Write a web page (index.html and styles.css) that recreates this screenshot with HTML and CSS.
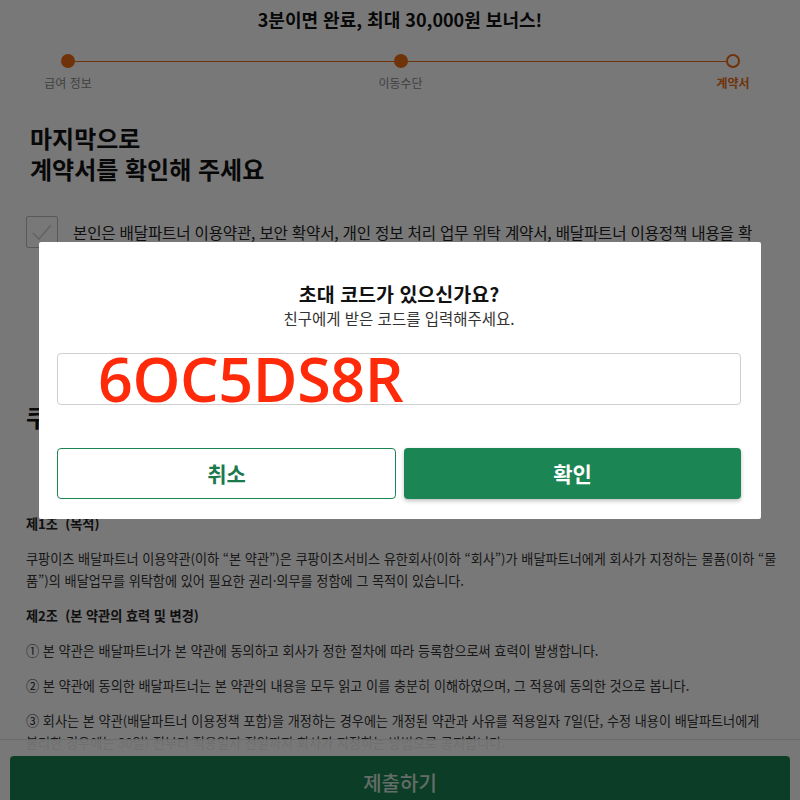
FILE: index.html
```html
<!DOCTYPE html>
<html lang="ko">
<head>
	<meta charset="utf-8">
	<meta name="viewport" content="width=device-width, initial-scale=1.0">
	<title>계약서 확인</title>
	<link rel="stylesheet" href="styles.css">
</head>
<body>
	<div class="page">
		<h1 class="top-title">3분이면 완료, 최대 30,000원 보너스!</h1>

		<div class="stepper">
			<span class="dot done"></span>
			<span class="line"></span>
			<span class="dot done"></span>
			<span class="line"></span>
			<span class="dot current"></span>
			<div class="label">급여 정보</div>
			<div class="label label-mid">이동수단</div>
			<div class="label label-end active">계약서</div>
		</div>

		<h2 class="intro">마지막으로<br>계약서를 확인해 주세요</h2>

		<div class="agree">
			<div class="checkbox">
				<svg width="32" height="32" viewBox="0 0 32 32">
					<polyline points="7,17 13,23 25,9" fill="none" stroke="#d2d2d2" stroke-width="1.6"/>
				</svg>
			</div>
			<p class="agree-text">본인은 배달파트너 이용약관, 보안 확약서, 개인 정보 처리 업무 위탁 계약서, 배달파트너 이용정책 내용을 확인하였으며 이에 동의합니다.</p>
		</div>

		<h3 class="terms-title">쿠팡이츠 배달파트너 이용약관</h3>

		<div class="terms">
			<p class="article">제1조 &nbsp;(목적)</p>
			<p>쿠팡이츠 배달파트너 이용약관(이하 “본 약관”)은 쿠팡이츠서비스 유한회사(이하 “회사”)가 배달파트너에게 회사가 지정하는 물품(이하 “물품”)의 배달업무를 위탁함에 있어 필요한 권리·의무를 정함에 그 목적이 있습니다.</p>
			<p class="article">제2조 &nbsp;(본 약관의 효력 및 변경)</p>
			<p>① 본 약관은 배달파트너가 본 약관에 동의하고 회사가 정한 절차에 따라 등록함으로써 효력이 발생합니다.</p>
			<p>② 본 약관에 동의한 배달파트너는 본 약관의 내용을 모두 읽고 이를 충분히 이해하였으며, 그 적용에 동의한 것으로 봅니다.</p>
			<p class="keep">③ 회사는 본 약관(배달파트너 이용정책 포함)을 개정하는 경우에는 개정된 약관과 사유를 적용일자 7일(단, 수정 내용이 배달파트너에게 불리한 경우에는 30일) 전부터 적용일자 전일까지 회사가 지정하는 방법으로 공지합니다.</p>
		</div>
	</div>

	<div class="footer">
		<button class="submit" disabled>제출하기</button>
	</div>

	<div class="overlay">
		<div class="modal">
			<h4 class="modal-title">초대 코드가 있으신가요?</h4>
			<p class="modal-sub">친구에게 받은 코드를 입력해주세요.</p>
			<div class="code-box">
				<span class="code">6OC5DS8R</span>
			</div>
			<div class="modal-btns">
				<button class="btn btn-cancel">취소</button>
				<button class="btn btn-ok">확인</button>
			</div>
		</div>
	</div>
</body>
</html>
```

FILE: styles.css
```css
* {
	padding: 0;
	margin: 0;
	box-sizing: border-box;
}
html, body {
	width: 100%;
	height: 100vh;
	overflow: hidden;
	background: #fff;
	color: #111;
	font-family: "Noto Sans CJK KR", "Noto Sans", sans-serif;
}
.page {
	height: 100vh;
	overflow: hidden;
}
.top-title {
	padding-top: 6px;
	font-size: 18px;
	line-height: 26px;
	font-weight: 700;
	text-align: center;
}
.stepper {
	display: grid;
	grid-template-columns: 14px 1fr 14px 1fr 14px;
	align-items: center;
	row-gap: 6px;
	margin-top: 22px;
	padding: 0 60px 0 61px;
}
.dot {
	width: 14px;
	height: 14px;
	border-radius: 50%;
	background: #ec6b15;
}
.dot.current {
	background: #fff;
	border: 2.5px solid #ec6b15;
}
.line {
	height: 1px;
	background: #ec6b15;
}
.label {
	grid-column: 1;
	display: flex;
	justify-content: center;
	width: 14px;
	white-space: nowrap;
	font-size: 12px;
	line-height: 18px;
	color: #8a8a8a;
}
.label-mid {
	grid-column: 3;
}
.label-end {
	grid-column: 5;
}
.label.active {
	color: #ec6b15;
	font-weight: 700;
}
.intro {
	margin-top: 30px;
	padding-left: 30px;
	font-size: 24px;
	line-height: 31px;
	font-weight: 700;
}
.agree {
	display: flex;
	gap: 15px;
	margin-top: 32px;
	padding-left: 26px;
}
.checkbox {
	width: 32px;
	height: 32px;
	flex-shrink: 0;
	border: 1.5px solid #bdbdbd;
	border-radius: 2px;
}
.checkbox svg {
	display: block;
	margin: -1.5px;
}
.agree-text {
	width: 684px;
	margin-top: 4px;
	font-size: 15.6px;
	line-height: 24px;
	letter-spacing: -0.2px;
	color: #222;
}
.terms-title {
	margin-top: 132px;
	padding-left: 26px;
	font-size: 24px;
	line-height: 34px;
	font-weight: 700;
}
.terms {
	margin-top: 79px;
	padding: 0 23px 0 26px;
	font-size: 13.15px;
	line-height: 22px;
	color: #333;
}
.terms p {
	margin-bottom: 13px;
}
.terms .keep {
	word-break: keep-all;
}
.terms .article {
	font-weight: 700;
	color: #222;
}
.footer {
	position: fixed;
	left: 0;
	right: 0;
	bottom: -8px;
	padding: 16px 10px 0;
	background: rgba(255, 255, 255, 0.9);
	border-top: 1px solid #e6e6e6;
}
.submit {
	width: 100%;
	height: 52px;
	border: none;
	border-radius: 4px;
	background: #1b8553;
	color: rgba(255, 255, 255, 0.82);
	font-family: inherit;
	font-size: 20px;
	font-weight: 500;
}
.overlay {
	position: fixed;
	inset: 0;
	display: flex;
	justify-content: center;
	align-items: center;
	padding-bottom: 40px;
	background: rgba(0, 0, 0, 0.53);
}
.modal {
	width: 722px;
	padding: 39px 20px 20px 18px;
	background: #fff;
	border-radius: 2px;
	text-align: center;
}
.modal-title {
	font-size: 19.5px;
	line-height: 26px;
	font-weight: 700;
	color: #111;
}
.modal-sub {
	font-size: 15.5px;
	line-height: 22px;
	color: #333;
}
.code-box {
	display: flex;
	align-items: center;
	height: 52px;
	margin-top: 24px;
	padding-left: 40px;
	border: 1px solid #cfcfcf;
	border-radius: 4px;
	text-align: left;
}
.code {
	font-family: "Open Sans", "Noto Sans", sans-serif;
	font-size: 61px;
	font-weight: 600;
	line-height: 1;
	color: #ff2a0a;
	letter-spacing: -0.4px;
}
.modal-btns {
	display: flex;
	gap: 8px;
	margin-top: 43px;
}
.btn {
	flex: 1;
	height: 51px;
	border-radius: 4px;
	font-family: inherit;
	font-size: 21px;
	font-weight: 700;
	cursor: pointer;
}
.btn-cancel {
	background: #fff;
	color: #1b7a4c;
	border: 1.5px solid #1b8553;
}
.btn-ok {
	background: #1b8553;
	color: #fff;
	border: none;
	box-shadow: 0 2px 4px rgba(0, 0, 0, 0.25);
}
```
